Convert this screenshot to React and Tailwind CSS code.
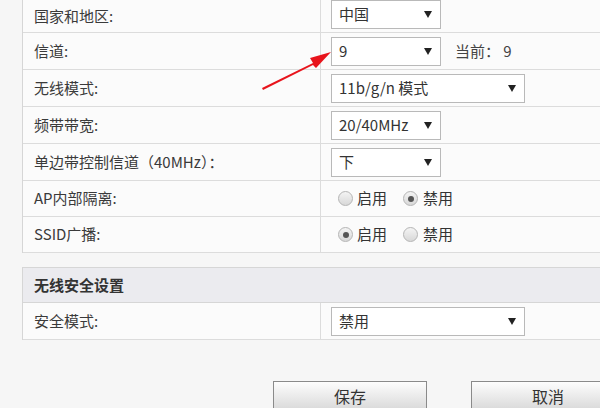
import React from "react";

const font = { fontFamily: '"Noto Sans CJK SC", "Liberation Sans", sans-serif' };

function Select({ value, w }) {
  return (
    <div
      className={`flex items-center justify-between h-[29px] border border-[#b9b9b9] bg-white pl-[7px] pr-[8px] text-[15px] text-[#333] ${w}`}
    >
      <span>{value}</span>
      <svg width="8" height="7" viewBox="0 0 8 7">
        <path d="M0 0 L8 0 L4 7 Z" fill="#222" />
      </svg>
    </div>
  );
}

function Radio({ checked }) {
  return (
    <span className="relative inline-block w-[15px] h-[15px] rounded-full border border-[#b5b5b5] bg-gradient-to-b from-[#f4f4f4] to-[#d8d8d8]">
      {checked && (
        <span className="absolute left-[3.5px] top-[3.5px] w-[6px] h-[6px] rounded-full bg-[#555]" />
      )}
    </span>
  );
}

function Row({ label, h = "h-[37px]", children }) {
  return (
    <div className={`flex ${h} border-b border-[#dcdcdc] bg-[#fbfbfb]`}>
      <div className="w-[298px] shrink-0 border-r border-[#dcdcdc] flex items-center pl-[11px] text-[15px] text-[#3a3a3a]">
        {label}
      </div>
      <div className="flex-1 flex items-center pl-[10px]">{children}</div>
    </div>
  );
}

export default function App() {
  return (
    <div className="relative w-[600px] h-[408px] overflow-hidden bg-[#f6f6f6]" style={font}>
      <div className="pl-[22px]">
        <div className="w-[640px] border-l border-[#d6d6d6]">
          <Row label="国家和地区:" h="h-[33px]">
            <div className="mt-[-3px]">
              <Select value="中国" w="w-[110px]" />
            </div>
          </Row>
          <Row label="信道:">
            <Select value="9" w="w-[110px]" />
            <span className="ml-[14px] text-[15px] text-[#444]">当前：&nbsp;9</span>
          </Row>
          <Row label="无线模式:">
            <Select value="11b/g/n 模式" w="w-[194px]" />
          </Row>
          <Row label="频带带宽:">
            <Select value="20/40MHz" w="w-[110px]" />
          </Row>
          <Row label="单边带控制信道（40MHz）：">
            <Select value="下" w="w-[110px]" />
          </Row>
          <Row label="AP内部隔离:" h="h-[36px]">
            <div className="flex items-center pl-[7px] text-[15px] text-[#333]">
              <Radio />
              <span className="ml-[4px]">启用</span>
              <span className="ml-[16px] flex"><Radio checked /></span>
              <span className="ml-[5px]">禁用</span>
            </div>
          </Row>
          <Row label="SSID广播:" h="h-[36px]">
            <div className="flex items-center pl-[7px] text-[15px] text-[#333]">
              <Radio checked />
              <span className="ml-[4px]">启用</span>
              <span className="ml-[16px] flex"><Radio /></span>
              <span className="ml-[5px]">禁用</span>
            </div>
          </Row>
        </div>
        <div className="h-[14px]" />
        <div className="w-[640px] border-l border-t border-[#d6d6d6]">
          <div className="h-[35px] bg-[#ebebef] border-b border-[#d6d6d6] flex items-center pl-[11px] text-[15px] font-bold text-[#333]">
            无线安全设置
          </div>
          <Row label="安全模式:">
            <Select value="禁用" w="w-[194px]" />
          </Row>
        </div>
        <div className="flex mt-[41px] ml-[251px] gap-[44px] w-[400px]">
          <button className="shrink-0 w-[154px] h-[30px] border border-[#8a8a8a] bg-gradient-to-b from-[#fdfdfd] to-[#d9d9d9] text-[16px] text-[#333]">
            保存
          </button>
          <button className="shrink-0 w-[154px] h-[30px] border border-[#8a8a8a] bg-gradient-to-b from-[#fdfdfd] to-[#d9d9d9] text-[16px] text-[#333]">
            取消
          </button>
        </div>
      </div>
      <svg className="absolute left-0 top-0" width="600" height="408" viewBox="0 0 600 408">
        <path d="M262 88 L313 63 L310 58 L331 52 L316 68 L313 65 L263 90 Z" fill="#e8141c" />
      </svg>
    </div>
  );
}
